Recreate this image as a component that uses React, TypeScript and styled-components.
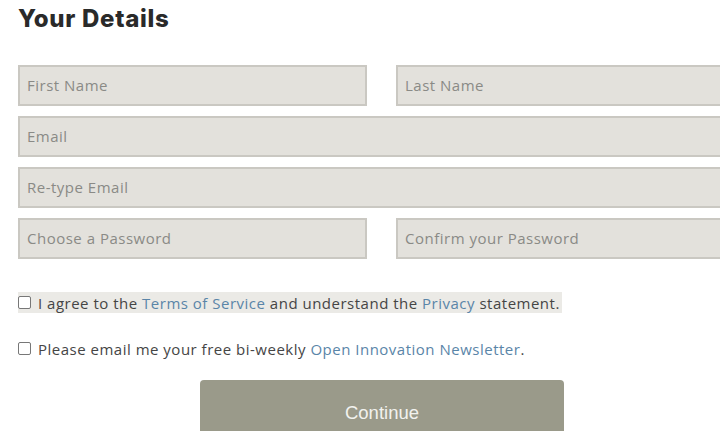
import React, { useState } from 'react';
import styled, { createGlobalStyle } from 'styled-components';

const GlobalStyle = createGlobalStyle`
  html, body {
    margin: 0;
    padding: 0;
    background: #fff;
    overflow: hidden;
  }
`;

interface CheckRowProps {
  highlight?: boolean;
}

function App() {
  const [agree, setAgree] = useState<boolean>(false);
  const [newsletter, setNewsletter] = useState<boolean>(false);

  return (
    <Page>
      <GlobalStyle />
      <Title>Your Details</Title>
      <Fields>
        <Field placeholder="First Name" />
        <Field placeholder="Last Name" />
        <Field placeholder="Email" wide />
        <Field placeholder="Re-type Email" wide />
        <Field type="password" placeholder="Choose a Password" />
        <Field type="password" placeholder="Confirm your Password" />
      </Fields>
      <Checks>
        <CheckRow highlight>
          <Box type="checkbox" checked={agree} onChange={() => setAgree(!agree)} />
          <span>
            I agree to the <Link href="#">Terms of Service</Link> and understand the{' '}
            <Link href="#">Privacy</Link> statement.
          </span>
        </CheckRow>
        <CheckRow>
          <Box type="checkbox" checked={newsletter} onChange={() => setNewsletter(!newsletter)} />
          <span>
            Please email me your free bi-weekly <Link href="#">Open Innovation Newsletter</Link>.
          </span>
        </CheckRow>
      </Checks>
      <ButtonRow>
        <Button>Continue</Button>
      </ButtonRow>
    </Page>
  );
}

export default App;

const Page = styled.div`
  width: 728px;
  padding: 4px 0 0 18px;
`;

const Title = styled.h1`
  margin: 0;
  font-family: 'Inter', 'Liberation Sans', sans-serif;
  font-weight: 800;
  font-size: 24px;
  line-height: 30px;
  color: #2a2a2a;
  letter-spacing: 0.7px;
`;

const Fields = styled.div`
  display: grid;
  grid-template-columns: 349px 349px;
  column-gap: 29px;
  row-gap: 10px;
  margin-top: 31px;
`;

const Field = styled.input<{ wide?: boolean }>`
  grid-column: ${(p) => (p.wide ? '1 / span 2' : 'auto')};
  box-sizing: border-box;
  height: 41px;
  margin: 0;
  padding: 0 7px 2px;
  border: 2px solid #cac8c2;
  background: #e3e1dc;
  font-family: 'Open Sans', 'Liberation Sans', sans-serif;
  font-size: 15px;
  letter-spacing: 0.5px;
  color: #555;
  outline: none;
  &::placeholder {
    color: #8a8a86;
  }
`;

const Checks = styled.div`
  display: flex;
  flex-direction: column;
  gap: 25px;
  margin-top: 33px;
`;

const CheckRow = styled.label<CheckRowProps>`
  display: flex;
  align-items: center;
  gap: 7px;
  width: max-content;
  height: 21px;
  padding-right: 2px;
  background: ${(p) => (p.highlight ? '#ebeae6' : 'transparent')};
  font-family: 'Open Sans', 'Liberation Sans', sans-serif;
  font-size: 15px;
  letter-spacing: 0.5px;
  color: #454545;
`;

const Box = styled.input`
  appearance: none;
  margin: 0;
  width: 13px;
  height: 13px;
  border: 1px solid #777;
  border-radius: 2px;
  background: #fff;
  &:checked {
    background: #5b86a8;
  }
`;

const Link = styled.a`
  color: #5a85a8;
  text-decoration: none;
`;

const ButtonRow = styled.div`
  display: flex;
  justify-content: center;
  margin-top: 21px;
`;

const Button = styled.button`
  width: 364px;
  height: 66px;
  border: none;
  border-radius: 4px;
  background: #9a9a8a;
  color: #f2f2ee;
  font-family: 'Liberation Sans', Arial, sans-serif;
  font-size: 18.5px;
  padding: 0;
  cursor: pointer;
`;
